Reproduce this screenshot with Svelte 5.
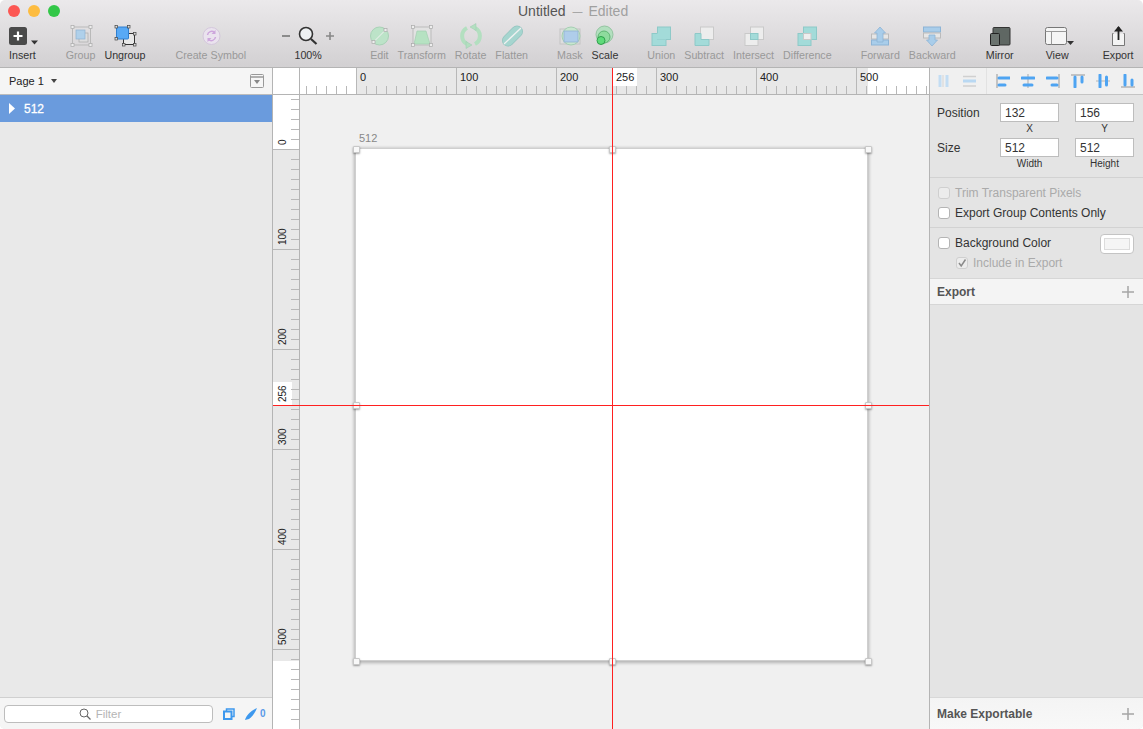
<script>
  const teal = '#a3dbd9';
  const tealEdge = '#8ec9c8';
  const grey = '#c9c9c9';

  const handle = (x, y) => `<rect x="${x - 1.5}" y="${y - 1.5}" width="3" height="3" fill="#eee" stroke="#aaa" stroke-width=".7"/>`;

  const icons = {
    insert: `<rect x="2" y="5" width="18" height="18" rx="2.5" fill="#4a4a4a"/><path d="M11 9.5v9M6.5 14h9" stroke="#fff" stroke-width="2.2"/><path d="M24 18.500h7l-3.500 4z" fill="#333"/>`,
    group: `<rect x="6.500" y="5" width="18" height="18" fill="none" stroke="#b9b9b9"/>${handle(6.5, 5)}${handle(24.5, 5)}${handle(6.5, 23)}${handle(24.5, 23)}<rect x="13" y="11" width="9" height="9" fill="#ddd" stroke="#aaa" stroke-width=".7"/><rect x="10" y="8" width="9" height="9" fill="#afd0ea" stroke="#8fb3d0" stroke-width=".7"/>`,
    ungroup: `<rect x="13.500" y="11.500" width="11" height="11" fill="#e8e8e8" stroke="#333"/><rect x="6.500" y="5" width="12" height="12" rx="1" fill="#58a9f5" stroke="#2f7fd0"/><g fill="#ddd" stroke="#444" stroke-width=".7"><rect x="5" y="3.500" width="2.500" height="2.500"/><rect x="17.500" y="3.500" width="2.500" height="2.500"/><rect x="5" y="15.500" width="2.500" height="2.500"/><rect x="23.500" y="10.500" width="2.500" height="2.500"/><rect x="12.500" y="21.500" width="2.500" height="2.500"/><rect x="23.500" y="21.500" width="2.500" height="2.500"/></g>`,
    symbol: `<circle cx="15.500" cy="14" r="8.500" fill="#eae3ee" stroke="#d4c7dc"/><path d="M11.500 13a4.200 4.200 0 0 1 7-2.500M19.500 15a4.200 4.200 0 0 1-7 2.500" fill="none" stroke="#cda6dc" stroke-width="1.500"/><path d="M19.500 8v4h-4zM11.500 20v-4h4z" fill="#cda6dc"/>`,
    zoom: `<path d="M-11 14h8" stroke="#777" stroke-width="1.600"/><circle cx="13" cy="12" r="6.500" fill="#eef1f3" stroke="#333" stroke-width="1.600"/><path d="M18 17l5.500 5" stroke="#333" stroke-width="2.200"/><path d="M33 14h8M37 10v8" stroke="#888" stroke-width="1.600"/>`,
    edit: `<circle cx="15.500" cy="14" r="9" fill="#bce3c8" stroke="#a8d2b6"/><path d="M9.500 20L21.500 8" stroke="#f1f1f1" stroke-width="1"/>${handle(9.5, 20)}${handle(21.5, 8)}`,
    transform: `<rect x="6" y="5" width="18" height="18" fill="#e2e2e2" stroke="#bbb"/><path d="M10 9h9l4 13H7z" fill="#b6e2c2" stroke="#a4cfb2" stroke-width=".7"/>${handle(6, 5)}${handle(24, 5)}${handle(6, 23)}${handle(24, 23)}`,
    rotate: `<path d="M11 6A9 9 0 0 0 11 22" fill="none" stroke="#b3dfc0" stroke-width="4"/><path d="M19 22A9 9 0 0 0 19 6" fill="none" stroke="#b3dfc0" stroke-width="4"/><path d="M16 23l-6 3.500v-7z" fill="#b3dfc0" stroke="#9fcab0" stroke-width=".5"/><path d="M14 5l6-3.500v7z" fill="#b3dfc0" stroke="#9fcab0" stroke-width=".5"/>`,
    flatten: `<path d="M11 18.500L20 9.500" stroke="#94c4bf" stroke-width="12" stroke-linecap="round"/><path d="M11 18.500L20 9.500" stroke="#a6d5cf" stroke-width="10.500" stroke-linecap="round"/><path d="M7 22L24 6" stroke="#f1f1f1" stroke-width="1.300"/>`,
    mask: `<rect x="5" y="7" width="20" height="15" fill="#dedede" stroke="#c4c4c4"/><circle cx="16" cy="14" r="9" fill="#c8e6cf" stroke="#a4cfb2"/><rect x="9" y="9" width="14" height="11" fill="#afcdea" stroke="#92b2d2" stroke-width=".8"/>`,
    scale: `<circle cx="14.500" cy="12.500" r="8.500" fill="#b3dfbf" stroke="#93c4a0"/><circle cx="14" cy="15" r="6" fill="#8edb9d" stroke="#5fb573"/><circle cx="11" cy="18.500" r="4" fill="#5fdb7a" stroke="#2f9f4c"/>`,
    union: `<rect x="6" y="11.500" width="14" height="12" fill="${teal}" stroke="${tealEdge}"/><rect x="11.500" y="5" width="13" height="12.500" fill="${teal}" stroke="${tealEdge}"/><rect x="11" y="11.500" width="9" height="6" fill="${teal}"/>`,
    subtract: `<rect x="11.500" y="5" width="13" height="12.500" fill="#ededed" stroke="${grey}"/><path d="M6 11.500h6v6h8v6H6z" fill="${teal}" stroke="${tealEdge}"/>`,
    intersect: `<rect x="6" y="11.500" width="13" height="12" fill="#ededed" stroke="${grey}"/><rect x="11.500" y="5" width="13" height="12.500" fill="#ededed" stroke="${grey}"/><rect x="11.500" y="11.500" width="7.500" height="6" fill="${teal}" stroke="${tealEdge}"/>`,
    difference: `<rect x="6" y="11.500" width="13" height="12" fill="${teal}" stroke="${tealEdge}"/><rect x="11.500" y="5" width="13" height="12.500" fill="${teal}" stroke="${tealEdge}"/><rect x="11.500" y="11.500" width="7.500" height="6" fill="#eee" stroke="${grey}"/>`,
    forward: `<rect x="6.500" y="12" width="17" height="5" fill="#e6e6e6" stroke="#bbb"/><rect x="6.500" y="18" width="17" height="5" fill="#a9cdea" stroke="#8db4d6"/><path d="M15 5l5.500 6H18v9h-6v-9H9.500z" fill="#a9cdea" stroke="#8db4d6" stroke-width=".8"/>`,
    backward: `<rect x="6.500" y="5" width="17" height="5" fill="#a9cdea" stroke="#8db4d6"/><rect x="6.500" y="11" width="17" height="5" fill="#e6e6e6" stroke="#bbb"/><path d="M15 24l5.500-6H18v-5h-6v5H9.500z" fill="#a9cdea" stroke="#8db4d6" stroke-width=".8"/>`,
    mirror: `<rect x="8" y="5.500" width="17" height="17.500" rx="1" fill="#5f6763" stroke="#333"/><rect x="5.500" y="11.500" width="9" height="12" rx="1" fill="#6b736f" stroke="#222"/>`,
    view: `<rect x="3.500" y="5.500" width="21" height="17" rx="2" fill="#f5f5f5" stroke="#777"/><path d="M3.500 9.500h21M9.500 9.500v13" stroke="#999"/><path d="M25 19h7l-3.500 4z" fill="#333"/>`,
    'export': `<path d="M10.500 11.500h-1v12h12v-12h-1" fill="#f4f4f4" stroke="#777"/><path d="M15.500 18V5" stroke="#222" stroke-width="1.800"/><path d="M11 9.500L15.500 4l4.500 5.500z" fill="#222"/>`
  };

  const groups = [
    { gap: 0, items: [{ label: 'Insert', icon: 'insert', on: true }] },
    { gap: 30, items: [{ label: 'Group', icon: 'group' }, { label: 'Ungroup', icon: 'ungroup', on: true }] },
    { gap: 30, items: [{ label: 'Create Symbol', icon: 'symbol' }] },
    { gap: 35, items: [{ label: '100%', icon: 'zoom', on: true, wide: true }] },
    { gap: 35, items: [{ label: 'Edit', icon: 'edit' }, { label: 'Transform', icon: 'transform' }, { label: 'Rotate', icon: 'rotate' }, { label: 'Flatten', icon: 'flatten' }] },
    { gap: 29, items: [{ label: 'Mask', icon: 'mask' }, { label: 'Scale', icon: 'scale', on: true }] },
    { gap: 29, items: [{ label: 'Union', icon: 'union' }, { label: 'Subtract', icon: 'subtract' }, { label: 'Intersect', icon: 'intersect' }, { label: 'Difference', icon: 'difference' }] },
    { gap: 29, items: [{ label: 'Forward', icon: 'forward' }, { label: 'Backward', icon: 'backward' }] },
    { gap: 30, items: [{ label: 'Mirror', icon: 'mirror', on: true }] },
    { gap: 32, items: [{ label: 'View', icon: 'view', on: true }] },
    { gap: 34, items: [{ label: 'Export', icon: 'export', on: true }] }
  ];

  const alignBlue = '#4ea4f2';
  const alignGrey = '#b5b5b5';
  const alignIcons = [
    `<path d="M3 1v12M10 1v12" stroke="#c3ddf3" stroke-width="3"/><path d="M6 1v12" stroke="#d4d4d4" stroke-width="1"/>`,
    `<path d="M1 7h13" stroke="#b9d8f2" stroke-width="3"/><path d="M1 2.500h13M1 12h13" stroke="#d0d0d0" stroke-width="1.300"/>`,
    `<path d="M1 0v14" stroke="${alignGrey}" stroke-width="1.500"/><path d="M3 4h11M3 11h6" stroke="${alignBlue}" stroke-width="3" stroke-linecap="round"/>`,
    `<path d="M7 0v14" stroke="${alignGrey}" stroke-width="1.200"/><path d="M1 4h12M3 11h8" stroke="${alignBlue}" stroke-width="3" stroke-linecap="round"/>`,
    `<path d="M13 0v14" stroke="${alignGrey}" stroke-width="1.500"/><path d="M1 4h10M6 11h5" stroke="${alignBlue}" stroke-width="3" stroke-linecap="round"/>`,
    `<path d="M0 1h14" stroke="${alignGrey}" stroke-width="1.500"/><path d="M4 3v10M11 3v5" stroke="${alignBlue}" stroke-width="3" stroke-linecap="round"/>`,
    `<path d="M0 7h14" stroke="${alignGrey}" stroke-width="1.200"/><path d="M4 1v12M10.500 3v8" stroke="${alignBlue}" stroke-width="3" stroke-linecap="round"/>`,
    `<path d="M0 13h14" stroke="${alignGrey}" stroke-width="1.500"/><path d="M4 1v10M11 6v5" stroke="${alignBlue}" stroke-width="3" stroke-linecap="round"/>`
  ];

  // rulers: canvas origin sits 56px in (horizontal) and 54px in (vertical)
  const hTicks = Array.from({ length: 63 }, (_, i) => 6 + i * 10);
  const vTicks = Array.from({ length: 64 }, (_, i) => 4 + i * 10);
  const labels = [0, 100, 200, 300, 400, 500];
  const handles = [[0, 0], [256, 0], [512, 0], [0, 256], [512, 256], [0, 512], [256, 512], [512, 512]];
</script>

<div class="window">
  <header class="toolbar">
    <div class="titlebar">
      <div class="lights">
        <span class="light red"></span>
        <span class="light amber"></span>
        <span class="light green"></span>
      </div>
      <div class="title">Untitled<span class="dash">—</span><span class="edited">Edited</span></div>
    </div>
    <div class="tools">
      {#each groups as group}
        <div class="tool-group" style:margin-left="{group.gap}px">
          {#each group.items as item}
            <div class="tool" class:on={item.on} class:wide={item.wide}>
              <svg class="tool-icon" viewBox="0 0 30 26" width="30" height="26">{@html icons[item.icon]}</svg>
              <span>{item.label}</span>
            </div>
          {/each}
        </div>
      {/each}
    </div>
  </header>

  <div class="main">
    <aside class="layers">
      <div class="page-head">
        <span class="page-name">Page 1</span>
        <svg class="caret" width="6" height="4" viewBox="0 0 6 4"><path d="M0 0h6L3 4z" fill="#444"/></svg>
        <svg class="collapse" width="14" height="14" viewBox="0 0 14 14"><rect x=".5" y=".5" width="13" height="13" rx="1" fill="#f6f6f6" stroke="#999"/><path d="M1 3h12" stroke="#999" stroke-width="1.500"/><path d="M4 6h6L7 10z" fill="#888"/></svg>
      </div>
      <div class="layer-row">
        <svg width="6" height="11" viewBox="0 0 6 11"><path d="M0 0l6 5.500L0 11z" fill="#fff"/></svg>
        <span>512</span>
      </div>
      <div class="layers-fill"></div>
      <div class="layers-foot">
        <div class="filter">
          <svg width="12" height="12" viewBox="0 0 12 12"><circle cx="5" cy="5" r="4" fill="none" stroke="#666" stroke-width="1"/><path d="M8 8l3.500 3.500" stroke="#666" stroke-width="1.200"/></svg>
          <span>Filter</span>
        </div>
        <svg class="pages" width="12" height="12" viewBox="0 0 12 12"><path d="M3.500 3V1h7.500v7.500H9" fill="none" stroke="#3d98ee" stroke-width="1.500"/><rect x="1" y="3.500" width="7.500" height="7.500" fill="none" stroke="#3d98ee" stroke-width="2"/></svg>
        <svg class="slice" width="13" height="12" viewBox="0 0 13 12"><path d="M0 12c1-4 5-9 12-12-2 5-5 9-8 11z" fill="#3d98ee"/></svg>
        <span class="count">0</span>
      </div>
    </aside>

    <section class="stage">
      <div class="corner"></div>
      <svg class="ruler-h" width="629" height="26" viewBox="0 0 629 26">
        <rect x="56" width="512" height="26" fill="#e8e8e8"/>
        <rect x="312" width="25" height="18" fill="#fff"/>
        {#each hTicks as x}
          <path d="M{x + 0.5} {(x - 56) % 100 === 0 ? 0 : 18}V26" stroke="#b8b8b8"/>
        {/each}
        {#each labels as n}
          <text x={60 + n} y="13">{n}</text>
        {/each}
        <text x="316" y="13">256</text>
      </svg>
      <svg class="ruler-v" width="26" height="634" viewBox="0 0 26 634">
        <rect y="54" width="26" height="512" fill="#e8e8e8"/>
        <rect y="287" width="19" height="23" fill="#fff"/>
        {#each vTicks as y}
          <path d="M{(y - 54) % 100 === 0 ? 0 : 18} {y + 0.5}H26" stroke="#b8b8b8"/>
        {/each}
        {#each labels as n}
          <text transform="translate(13 {50 + n}) rotate(-90)">{n}</text>
        {/each}
        <text transform="translate(13 307) rotate(-90)">256</text>
      </svg>
      <div class="canvas">
        <div class="artboard-name">512</div>
        <div class="artboard"></div>
        {#each handles as [x, y]}
          <span class="grip" style:left="{56 + x}px" style:top="{54 + y}px"></span>
        {/each}
      </div>
      <div class="guide-v"></div>
      <div class="guide-h"></div>
    </section>

    <aside class="inspector">
      <div class="align-row">
        {#each alignIcons as markup, i}
          {#if i === 2}<span class="align-sep"></span>{/if}
          <svg class="align-icon" width="14" height="14" viewBox="0 0 14 14">{@html markup}</svg>
        {/each}
      </div>

      <div class="geometry">
        <span class="geo-label">Position</span>
        <span class="field">132</span>
        <span></span>
        <span class="field">156</span>
        <span></span>
        <span class="sub">X</span>
        <span></span>
        <span class="sub">Y</span>

        <span class="geo-label">Size</span>
        <span class="field">512</span>
        <span></span>
        <span class="field">512</span>
        <span></span>
        <span class="sub">Width</span>
        <span></span>
        <span class="sub">Height</span>
      </div>

      <div class="checks first">
        <label class="check off"><span class="box"></span>Trim Transparent Pixels</label>
        <label class="check"><span class="box"></span>Export Group Contents Only</label>
      </div>

      <div class="checks second">
        <div class="swatch"><span></span></div>
        <label class="check"><span class="box"></span>Background Color</label>
        <label class="check off nested">
          <span class="box">
            <svg width="10" height="10" viewBox="0 0 10 10"><path d="M2 5l2.200 3L8.500 1.500" fill="none" stroke="#8a8a8a" stroke-width="1.500"/></svg>
          </span>Include in Export
        </label>
      </div>

      <div class="band export-band">
        <b>Export</b>
        <svg width="12" height="12" viewBox="0 0 12 12"><path d="M6 0v12M0 6h12" stroke="#a5a5a5" stroke-width="1.500"/></svg>
      </div>
      <div class="inspector-fill"></div>
      <div class="band make-band">
        <b>Make Exportable</b>
        <svg width="12" height="12" viewBox="0 0 12 12"><path d="M6 0v12M0 6h12" stroke="#a5a5a5" stroke-width="1.500"/></svg>
      </div>
    </aside>
  </div>
</div>

<style>
  :global(body) {
    margin: 0;
    background: #fff;
  }

  .window {
    width: 1143px;
    height: 729px;
    display: flex;
    flex-direction: column;
    overflow: hidden;
    border-radius: 5px;
    font-family: "Liberation Sans", Arial, sans-serif;
    font-size: 11px;
    color: #333;
  }

  .toolbar {
    height: 68px;
    box-sizing: border-box;
    flex: none;
    background: linear-gradient(#ebe9eb, #d2d0d2);
    border-bottom: 1px solid #b4b4b4;
  }

  .titlebar {
    height: 22px;
    display: flex;
    align-items: center;
    position: relative;
  }

  .lights {
    display: flex;
    gap: 8px;
    padding-left: 8px;
  }

  .light {
    width: 12px;
    height: 12px;
    border-radius: 50%;
  }

  .red { background: #fc5753; }
  .amber { background: #fdbc40; }
  .green { background: #33c748; }

  .title {
    position: absolute;
    left: 518px;
    top: 3px;
    font-size: 14px;
    line-height: 16px;
    color: #555;
    white-space: pre;
  }

  .dash {
    font-size: 10px;
    margin: 0 6px 0 7px;
    color: #999;
    vertical-align: 1px;
  }

  .edited {
    color: #a0a0a0;
  }

  .tools {
    display: flex;
    padding-left: 9px;
  }

  .tool-group {
    display: flex;
    gap: 9px;
  }

  .tool {
    display: flex;
    flex-direction: column;
    align-items: center;
    font-size: 10.700px;
    color: #999;
    line-height: 14px;
    white-space: nowrap;
    height: 45px;
  }

  .tool.on {
    color: #333;
  }

  .tool.wide {
    width: 54px;
  }

  .tool-icon {
    flex: none;
    margin: 0 -15px;
    overflow: visible;
  }

  .main {
    flex: 1;
    display: flex;
    min-height: 0;
  }

  .layers {
    width: 272px;
    flex: none;
    display: flex;
    flex-direction: column;
    background: #e9e9e9;
    border-right: 1px solid #b4b4b4;
  }

  .page-head {
    height: 26px;
    flex: none;
    display: flex;
    align-items: center;
    padding: 0 8px 0 9px;
    background: #f5f5f5;
    border-bottom: 1px solid #bcbcbc;
    font-size: 11px;
    color: #222;
  }

  .caret {
    margin-left: 7px;
  }

  .collapse {
    margin-left: auto;
  }

  .layer-row {
    height: 27px;
    flex: none;
    display: flex;
    align-items: center;
    gap: 9px;
    padding-left: 9px;
    background: #6a9bdd;
    color: #fff;
    font-size: 12px;
    -webkit-text-stroke: .3px #fff;
  }

  .layers-fill {
    flex: 1;
  }

  .layers-foot {
    height: 32px;
    flex: none;
    box-sizing: border-box;
    display: flex;
    align-items: center;
    padding: 0 0 0 4px;
    background: #f5f5f5;
    border-top: 1px solid #d0d0d0;
  }

  .filter {
    width: 209px;
    height: 18px;
    box-sizing: border-box;
    display: flex;
    align-items: center;
    justify-content: center;
    gap: 5px;
    padding-right: 17px;
    background: #fff;
    border: 1px solid #bdbdbd;
    border-radius: 4px;
    color: #b5b5b5;
    font-size: 11.500px;
  }

  .pages {
    margin-left: 10px;
  }

  .slice {
    margin-left: 10px;
  }

  .count {
    margin-left: 2px;
    font-size: 10px;
    font-weight: bold;
    color: #5a9ae8;
  }

  .stage {
    width: 656px;
    flex: none;
    position: relative;
    display: grid;
    grid-template-columns: 27px 1fr;
    grid-template-rows: 27px 1fr;
    background: #f0f0f0;
    overflow: hidden;
  }

  .corner {
    background: #fff;
    border-right: 1px solid #b4b4b4;
    border-bottom: 1px solid #b4b4b4;
    box-sizing: border-box;
  }

  .ruler-h {
    display: block;
    background: #fff;
    border-bottom: 1px solid #b4b4b4;
  }

  .ruler-v {
    display: block;
    background: #fff;
    border-right: 1px solid #b4b4b4;
  }

  .ruler-h text, .ruler-v text {
    font-family: "Liberation Sans", Arial, sans-serif;
    font-size: 11px;
    fill: #222;
  }

  .ruler-v text {
    font-size: 10px;
  }

  .canvas {
    position: relative;
  }

  .artboard {
    position: absolute;
    left: 56px;
    top: 54px;
    width: 511px;
    height: 511px;
    background: #fff;
    box-shadow: 0 0 0 1px #cfcfcf, 0 1px 3px 2px rgba(0, 0, 0, .25);
  }

  .artboard-name {
    position: absolute;
    left: 59px;
    top: 37px;
    line-height: 13px;
    color: #888;
  }

  .grip {
    position: absolute;
    width: 7px;
    height: 7px;
    margin: -3px 0 0 -3px;
    box-sizing: border-box;
    background: #f8f8f8;
    border: 1px solid #c8c8c8;
    border-radius: 1px;
    box-shadow: 0 1px 2px rgba(0, 0, 0, .35);
  }

  .guide-v {
    position: absolute;
    left: 339px;
    top: 0;
    bottom: 0;
    width: 1px;
    background: #ff2020;
  }

  .guide-h {
    position: absolute;
    left: 0;
    right: 0;
    top: 337px;
    height: 1px;
    background: #ff2020;
  }

  .inspector {
    width: 213px;
    flex: none;
    display: flex;
    flex-direction: column;
    background: #e4e4e4;
    border-left: 1px solid #b4b4b4;
    font-size: 12px;
    color: #333;
  }

  .align-row {
    height: 26px;
    flex: none;
    display: flex;
    align-items: center;
    background: #f0f0f0;
    border-bottom: 1px solid #c4c4c4;
    padding-left: 7px;
    gap: 11px;
  }

  .align-sep {
    width: 1px;
    height: 26px;
    background: #e2e2e2;
    margin: 0 -2px 0 -1px;
  }

  .align-icon {
    flex: none;
  }

  .geometry {
    display: grid;
    grid-template-columns: 63px 59px 16px 59px;
    grid-template-rows: 19px 16px 19px 16px;
    padding: 8px 0 4px 7px;
    align-items: center;
    border-bottom: 1px solid #d2d2d2;
    flex: none;
  }

  .field {
    height: 19px;
    box-sizing: border-box;
    background: #fff;
    border: 1px solid #bdbdbd;
    padding-left: 4px;
    line-height: 18px;
    font-size: 12px;
  }

  .sub {
    font-size: 10px;
    line-height: 12px;
    margin-top: 1px;
    align-self: start;
    text-align: center;
    color: #333;
  }

  .checks {
    flex: none;
    position: relative;
    display: flex;
    flex-direction: column;
    padding: 5px 0 4px 8px;
    border-bottom: 1px solid #d2d2d2;
  }

  .checks.second {
    padding-top: 5px;
    padding-bottom: 5px;
    border-bottom-color: #d6d6d6;
  }

  .check {
    display: flex;
    align-items: center;
    height: 20px;
    gap: 5px;
    font-size: 12px;
    color: #333;
  }

  .check.off {
    color: #aaa;
  }

  .check.nested {
    margin-left: 18px;
  }

  .box {
    width: 12px;
    height: 12px;
    box-sizing: border-box;
    display: flex;
    align-items: center;
    justify-content: center;
    background: #fff;
    border: 1px solid #b4b4b4;
    border-radius: 3px;
  }

  .off .box {
    background: #ececec;
    border-color: #cfcfcf;
  }

  .swatch {
    position: absolute;
    right: 9px;
    top: 6px;
    width: 34px;
    height: 20px;
    box-sizing: border-box;
    padding: 3px;
    background: #fff;
    border: 1px solid #c4c4c4;
    border-radius: 4px;
    display: flex;
  }

  .swatch span {
    flex: 1;
    background: #f5f5f5;
    border: 1px solid #dcdcdc;
  }

  .band {
    flex: none;
    display: flex;
    align-items: center;
    justify-content: space-between;
    padding: 0 9px 0 7px;
    box-sizing: border-box;
    font-size: 12px;
    color: #555;
  }

  .export-band {
    height: 26px;
    background: #f4f4f4;
    border-bottom: 1px solid #d6d6d6;
  }

  .make-band {
    height: 32px;
    background: linear-gradient(#f4f4f4, #f8f8f8);
    border-top: 1px solid #d8d8d8;
  }

  .inspector-fill {
    flex: 1;
  }
</style>
